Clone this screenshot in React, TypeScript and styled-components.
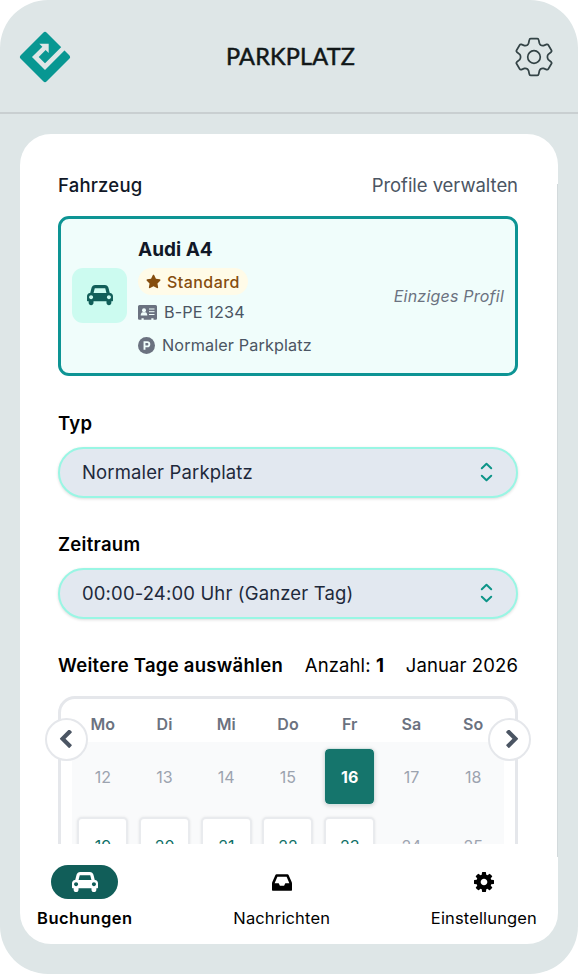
import React from "react";
import styled, { createGlobalStyle, css } from "styled-components";
import { FaStar } from "react-icons/fa";

const GlobalStyle = createGlobalStyle`
  * { box-sizing: border-box; }
  body { margin: 0; background: #fff; font-family: Inter, "Liberation Sans", sans-serif; color: #000; }
  svg { display: block; flex: none; }
`;

const Phone = styled.div`
  width: 578px;
  height: 974px;
  border-radius: 48px;
  background: #dee6e7;
  overflow: hidden;
  display: flex;
  flex-direction: column;
`;

const Header = styled.header`
  height: 114px;
  flex: none;
  border-bottom: 2px solid #c9cfd1;
  padding: 2px 25px 0 19px;
  display: grid;
  grid-template-columns: 52px 1fr 38px;
  align-items: center;
`;

const Title = styled.h1`
  margin: 0;
  padding: 0 5px 2px 0;
  text-align: center;
  font-family: Lato, sans-serif;
  font-size: 23.5px;
  line-height: 32px;
  font-weight: 400;
  letter-spacing: 0.15px;
  -webkit-text-stroke: 0.5px #111718;
  color: #111718;
  white-space: nowrap;
`;

const Sheet = styled.main`
  position: relative;
  margin: 20px 20px 30px;
  height: 810px;
  border-radius: 31px;
  background: #fff;
  overflow: hidden;
  display: flex;
  flex-direction: column;
  &::after {
    content: "";
    position: absolute;
    right: 0;
    top: 50px;
    height: 673px;
    width: 1px;
    background: #d3dadc;
  }
`;

const Content = styled.div`
  height: 710px;
  flex: none;
  overflow: hidden;
  padding: 37px 40px 0 38px;
`;

const Row = styled.div`
  display: flex;
  align-items: center;
  justify-content: space-between;
  height: 28px;
  white-space: nowrap;
`;

const Label = styled.h2<{ $soft?: boolean }>`
  margin: 0;
  font-size: 18.5px;
  line-height: 28px;
  font-weight: ${(p) => (p.$soft ? 500 : 600)};
  letter-spacing: ${(p) => (p.$soft ? "0.2px" : "0.28px")};
  color: ${(p) => (p.$soft ? "#111827" : "#000")};
`;

const Hint = styled.span<{ $soft?: boolean }>`
  font-size: 18.5px;
  line-height: 28px;
  letter-spacing: ${(p) => (p.$soft ? "-0.05px" : "0.1px")};
  color: ${(p) => (p.$soft ? "#4b5563" : "#000")};
`;

const Vehicle = styled.section`
  margin-top: 17px;
  height: 160px;
  border: 3px solid #0d9494;
  border-radius: 11px;
  background: #f0fdfb;
  padding: 0 11px 0 11px;
  display: flex;
  align-items: center;
`;

const CarTile = styled.div`
  width: 55px;
  height: 55px;
  margin-bottom: 1px;
  border-radius: 11px;
  background: #ccfbf0;
  color: #115e59;
  display: grid;
  place-items: center;
`;

const Details = styled.div`
  margin-left: 11px;
  height: 154px;
  flex: 1;
  padding-top: 17px;
`;

const CarName = styled.div`
  font-size: 19px;
  line-height: 27px;
  font-weight: 700;
  color: #111827;
`;

const Badge = styled.span`
  display: inline-flex;
  align-items: center;
  gap: 6px;
  width: 110px;
  height: 27px;
  margin-top: 5px;
  padding-left: 8px;
  border-radius: 14px;
  background: #fffbe8;
  color: #854d0e;
  font-size: 16px;
  font-weight: 500;
  letter-spacing: 0.45px;
`;

const Fact = styled.div<{ $top: number }>`
  display: flex;
  align-items: center;
  gap: 7px;
  height: 22px;
  margin-top: ${(p) => p.$top}px;
  font-size: 16.2px;
  letter-spacing: 0.14px;
  color: #4b5563;
`;

const Only = styled.em`
  font-size: 16px;
  letter-spacing: 0.22px;
  color: #6b7280;
`;

const Field = styled.section<{ $top: number }>`
  margin-top: ${(p) => p.$top}px;
`;

const Select = styled.button`
  width: 100%;
  height: 51px;
  margin-top: 10px;
  padding: 0 23px 1px 22px;
  border: 2px solid #99f6e4;
  border-radius: 26px;
  background: #e2e8f0;
  box-shadow: 0 1px 3px rgba(0, 0, 0, 0.14);
  display: flex;
  align-items: center;
  justify-content: space-between;
  font: 400 18.5px Inter, sans-serif;
  letter-spacing: 0.14px;
  color: #1e293b;
`;

const CalendarHead = styled(Row)`
  margin-top: 32px;
`;

const Calendar = styled.section`
  position: relative;
  margin-top: 17px;
  height: 240px;
  border: 3px solid #e5e7eb;
  border-radius: 17px;
  padding: 0 11px;
`;

const Week = styled.div<{ $shaded?: boolean }>`
  display: grid;
  grid-template-columns: repeat(7, 1fr);
  justify-items: center;
  ${(p) => p.$shaded && css`background: #f9fafb;`}
`;

const Weekday = styled.span`
  height: 43px;
  padding-top: 2px;
  line-height: 46px;
  font-size: 16px;
  font-weight: 600;
  letter-spacing: 0.1px;
  color: #6b7280;
`;

const Day = styled.span<{ $kind: "off" | "open" | "picked" }>`
  width: 51px;
  height: 57px;
  margin: 6px 0;
  border-radius: 5px;
  display: grid;
  place-items: center;
  font-size: 16px;
  color: #9ca3af;
  ${(p) => p.$kind === "open" && css`
    border: 2px solid #e9ebee;
    background: #fff;
    color: #0f6f66;
    box-shadow: 0 0 3px rgba(0, 0, 0, 0.08);
  `}
  ${(p) => p.$kind === "picked" && css`
    border: 1px solid #d7e5e4;
    background: #15756c;
    background-clip: padding-box;
    color: #fff;
    font-weight: 700;
    box-shadow: 0 1px 4px rgba(0, 0, 0, 0.15);
  `}
`;

const Pager = styled.button<{ $side: "left" | "right" }>`
  position: absolute;
  top: 19px;
  ${(p) => p.$side}: -16px;
  width: 43px;
  height: 43px;
  padding: ${(p) => (p.$side === "right" ? "0 0 2px 4px" : "0 2px 2px 0")};
  border: 2.5px solid #e5e7eb;
  border-radius: 50%;
  background: #fff;
  color: #4b5563;
  display: grid;
  place-items: center;
`;

const TabBar = styled.nav`
  height: 100px;
  display: flex;
  justify-content: space-between;
  padding: 12px 21px 0 17px;
`;

const Tab = styled.div<{ $active?: boolean }>`
  display: flex;
  flex-direction: column;
  align-items: center;
  font-size: 16.5px;
  line-height: 22px;
  letter-spacing: ${(p) => (p.$active ? "0.5px" : "0.15px")};
  font-weight: ${(p) => (p.$active ? 600 : 400)};
`;

const TabIcon = styled.span<{ $active?: boolean }>`
  width: 67px;
  height: 34px;
  margin: 9px 0 8px;
  border-radius: 17px;
  display: grid;
  place-items: center;
  ${(p) => p.$active && css`background: #115e59; color: #fff;`}
`;

const Logo = () => (
  <svg width="52" height="52" viewBox="19 31 52 52">
    <path d="M45 34.5 67.5 57 45 79.5 22.5 57Z" fill="#089792" stroke="#089792" strokeWidth="5" strokeLinejoin="round" />
    <path d="M67 44.7 45 66.7 35.3 57 45 47.3" fill="none" stroke="#dee6e7" strokeWidth="4.7" />
    <path d="M39.3 43.7H48.7V53Z" fill="#dee6e7" />
  </svg>
);

const HeaderGear = () => (
  <svg width="38" height="40" viewBox="-19 -20 38 40" fill="none" stroke="#334346" strokeWidth="1.7" strokeLinejoin="round">
    <path d="M-4.7-17Q-4.5-18.3-3.3-18.3H3.3Q4.5-18.3 4.7-17L5.4-13.8Q6.3-11 9.5-11.4L12.6-12.6Q13.7-13 14.3-12L17.4-6.8Q18-5.8 17.2-5L14.3-2.7Q12.5 0 14.3 2.7L17.2 5Q18 5.8 17.4 6.8L14.3 12Q13.7 13 12.6 12.6L9.5 11.4Q6.3 11 5.4 13.8L4.7 17Q4.5 18.3 3.3 18.3H-3.3Q-4.5 18.3-4.7 17L-5.4 13.8Q-6.3 11-9.5 11.4L-12.6 12.6Q-13.7 13-14.3 12L-17.4 6.8Q-18 5.8-17.2 5L-14.3 2.7Q-12.5 0-14.3-2.7L-17.2-5Q-18-5.8-17.4-6.8L-14.3-12Q-13.7-13-12.6-12.6L-9.5-11.4Q-6.3-11-5.4-13.8Z" />
    <circle r="6.3" />
  </svg>
);

const CarIcon = ({ width = 26 }: { width?: number }) => (
  <svg width={width} height={width * 0.78} viewBox="0 128 2048 1600" fill="currentColor">
    <path d="M480 1088q0-66-47-113t-113-47-113 47-47 113 47 113 113 47 113-47 47-113zm36-320h1016l-89-357q-2-8-14-17.5t-21-9.5h-768q-9 0-21 9.5t-14 17.5zm1372 320q0-66-47-113t-113-47-113 47-47 113 47 113 113 47 113-47 47-113zm160-96v384q0 14-9 23t-23 9h-96v128q0 80-56 136t-136 56-136-56-56-136v-128h-1024v128q0 80-56 136t-136 56-136-56-56-136v-128h-96q-14 0-23-9t-9-23v-384q0-93 65.5-158.5t158.5-65.5h28l105-419q23-94 104-157.5t179-63.5h768q98 0 179 63.5t104 157.5l105 419h28q93 0 158.5 65.5t65.5 158.5z" />
  </svg>
);

const InboxIcon = () => (
  <svg width="20" height="17" viewBox="0 256 1536 1280">
    <path d="M1023 960h316q-1-3-2.5-8.5t-2.5-7.5l-212-496h-708l-212 496q-1 3-2.5 8.5t-2.5 7.5h316l95 192h320zM1536 990v482q0 26-19 45t-45 19h-1408q-26 0-45-19t-19-45v-482q0-62 25-123l238-552q10-25 36.5-42t52.5-17h832q26 0 52.5 17t36.5 42l238 552q25 61 25 123z" />
  </svg>
);

const CogIcon = () => (
  <svg width="20" height="20" viewBox="128 128 1536 1536">
    <path d="M1152 896q0-106-75-181t-181-75-181 75-75 181 75 181 181 75 181-75 75-181zm512-109v222q0 12-8 23t-20 13l-185 28q-19 54-39 91 35 50 107 138 10 12 10 25t-9 23q-27 37-99 108t-94 71q-12 0-26-9l-138-108q-44 23-91 38-16 136-29 186-7 28-36 28h-222q-14 0-24.5-8.5t-11.5-21.5l-28-184q-49-16-90-37l-141 107q-10 9-25 9-14 0-25-11-126-114-165-168-7-10-7-23 0-12 8-23 15-21 51-66.5t54-70.5q-27-50-41-99l-183-27q-13-2-21-12.5t-8-23.5v-222q0-12 8-23t19-13l186-28q14-46 39-92-40-57-107-138-10-12-10-24 0-10 9-23 26-36 98.5-107.5t94.5-71.5q13 0 26 10l138 107q44-23 91-38 16-136 29-186 7-28 36-28h222q14 0 24.5 8.5t11.5 21.5l28 184q49 16 90 37l142-107q9-9 24-9 13 0 25 10 129 119 165 170 7 8 7 22 0 12-8 23-15 21-51 66.5t-54 70.5q26 50 41 98l183 28q13 2 21 12.5t8 23.5z" />
  </svg>
);

const Chevron = ({ flip }: { flip?: boolean }) => (
  <svg width="14" height="18" viewBox="330 70 1220 1568" fill="currentColor">
    <path
      transform={flip ? "matrix(-1 0 0 1 1880 0)" : undefined}
      d="M1427 301l-531 531 531 531q19 19 19 45t-19 45l-166 166q-19 19-45 19t-45-19l-742-742q-19-19-19-45t19-45l742-742q19-19 45-19t45 19l166 166q19 19 19 45t-19 45z"
    />
  </svg>
);

const UpDown = () => (
  <svg width="13" height="20" viewBox="0 0 13 20" fill="none" stroke="#0d9488" strokeWidth="2" strokeLinecap="round" strokeLinejoin="round">
    <path d="M1.8 6.2 6.5 1.8l4.7 4.4M1.8 13.8l4.7 4.4 4.7-4.4" />
  </svg>
);

const PlateIcon = () => (
  <svg width="19" height="15" viewBox="0 0 19 15">
    <path d="M1.5 0h16A1.5 1.5 0 0 1 19 1.5V13.5a1.2 1.2 0 0 1-1.2 1.2H15.5V13.3h-2.2v1.4H5.7V13.3H3.5v1.4H1.2A1.2 1.2 0 0 1 0 13.5V1.5A1.5 1.5 0 0 1 1.5 0Z" fill="#6b7280" />
    <circle cx="6" cy="5.3" r="2" fill="#f0fdfb" />
    <path d="M2.7 10.5c0-2 .8-3.3 2-3.3h2.6c1.2 0 2 1.3 2 3.3Z" fill="#f0fdfb" />
    <path d="M11 4h5.5M11 6.7h5.5M11 9.5h5.5" stroke="#f0fdfb" strokeWidth="1" />
  </svg>
);

const ParkingIcon = () => (
  <svg width="17" height="17" viewBox="0 0 17 17">
    <circle cx="8.5" cy="8.5" r="8.5" fill="#6b7280" />
    <path d="M6.5 12.7V5.1h2.7a2.15 2.15 0 0 1 0 4.3H6.5" fill="none" stroke="#f0fdfb" strokeWidth="1.9" />
  </svg>
);

const weekdays = ["Mo", "Di", "Mi", "Do", "Fr", "Sa", "So"];
const firstWeek = [12, 13, 14, 15, 16, 17, 18];
const secondWeek = [19, 20, 21, 22, 23, 24, 25];

export default function App() {
  return (
    <>
      <GlobalStyle />
      <Phone>
        <Header>
          <Logo />
          <Title>PARKPLATZ</Title>
          <HeaderGear />
        </Header>
        <Sheet>
          <Content>
            <Row>
              <Label $soft>Fahrzeug</Label>
              <Hint $soft>Profile verwalten</Hint>
            </Row>
            <Vehicle>
              <CarTile><CarIcon /></CarTile>
              <Details>
                <CarName>Audi A4</CarName>
                <Badge><FaStar size={15} />Standard</Badge>
                <Fact $top={6}><PlateIcon />B-PE 1234</Fact>
                <Fact $top={11}><ParkingIcon />Normaler Parkplatz</Fact>
              </Details>
              <Only>Einziges Profil</Only>
            </Vehicle>
            <Field $top={33}>
              <Label>Typ</Label>
              <Select>Normaler Parkplatz<UpDown /></Select>
            </Field>
            <Field $top={32}>
              <Label>Zeitraum</Label>
              <Select>00:00-24:00 Uhr (Ganzer Tag)<UpDown /></Select>
            </Field>
            <CalendarHead>
              <Label>Weitere Tage auswählen</Label>
              <Hint>Anzahl: <b>1</b></Hint>
              <Hint>Januar 2026</Hint>
            </CalendarHead>
            <Calendar>
              <Week>{weekdays.map((d) => <Weekday key={d}>{d}</Weekday>)}</Week>
              <Week $shaded>
                {firstWeek.map((d) => <Day key={d} $kind={d === 16 ? "picked" : "off"}>{d}</Day>)}
              </Week>
              <Week $shaded>
                {secondWeek.map((d) => <Day key={d} $kind={d < 24 ? "open" : "off"}>{d}</Day>)}
              </Week>
              <Pager $side="left"><Chevron /></Pager>
              <Pager $side="right"><Chevron flip /></Pager>
            </Calendar>
          </Content>
          <TabBar>
            <Tab $active><TabIcon $active><CarIcon /></TabIcon>Buchungen</Tab>
            <Tab><TabIcon><InboxIcon /></TabIcon>Nachrichten</Tab>
            <Tab><TabIcon><CogIcon /></TabIcon>Einstellungen</Tab>
          </TabBar>
        </Sheet>
      </Phone>
    </>
  );
}
